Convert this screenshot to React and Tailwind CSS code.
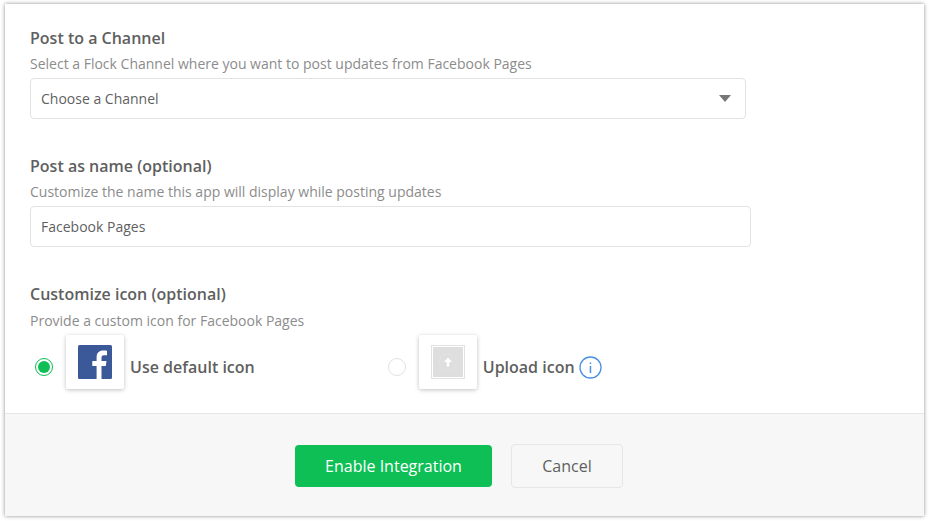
import React from 'react';

const Field = ({ title, hint, gap = 'mt-[5px]', children }) => (
  <div>
    <h3 className="text-base leading-[22px] font-semibold text-[#5f5f5f]">{title}</h3>
    <p className={`${gap} text-sm leading-[19px] text-[#8c8c8c]`}>{hint}</p>
    {children}
  </div>
);

const IconTile = ({ children }) => (
  <div className="flex h-[54px] w-[58px] items-center justify-center rounded-[2px] bg-white shadow-[0_1px_4px_rgba(0,0,0,0.25)]">
    {children}
  </div>
);

const App = () => {
  return (
    <div className="h-[521px] w-[929px] bg-white pt-[4px] pl-[5px] font-['Open_Sans',sans-serif]">
      <div className="flex h-[512px] w-[919px] flex-col bg-white shadow-[0_0_4px_rgba(0,0,0,0.45)]">
        <div className="h-[409px] pt-[23px] pl-[25px]">
          <Field title="Post to a Channel" hint="Select a Flock Channel where you want to post updates from Facebook Pages">
            <div className="mt-[5px] flex h-[41px] w-[716px] items-center justify-between rounded-[4px] border border-[#e2e2e2] pr-[14px] pl-[10px] text-sm text-[#5f5f5f]">
              <span>Choose a Channel</span>
              <svg width="12" height="7" viewBox="0 0 12 7"><path d="M0 0h12L6 7z" fill="#777" /></svg>
            </div>
          </Field>

          <div className="mt-[36px]">
            <Field title="Post as name (optional)" hint="Customize the name this app will display while posting updates">
              <div className="mt-[5px] flex h-[41px] w-[721px] items-center rounded-[4px] border border-[#e2e2e2] pl-[10px] text-sm text-[#5f5f5f]">
                Facebook Pages
              </div>
            </Field>
          </div>

          <div className="mt-[36px]">
            <Field title="Customize icon (optional)" hint="Provide a custom icon for Facebook Pages" gap="mt-[6px]">
              <div className="mt-[5px] flex items-center">
                <div className="mt-[10px] ml-[5px] flex h-[18px] w-[18px] items-center justify-center rounded-full border border-[#0dbf55]">
                  <div className="h-[12px] w-[12px] rounded-full bg-[#0dbf55]" />
                </div>
                <div className="ml-[13px]">
                  <IconTile>
                    <svg width="34" height="34" viewBox="0 0 34 34">
                      <rect width="34" height="34" rx="1.5" fill="#3b5998" />
                      <path d="M23.5 34V21h4.3l.7-5h-5v-3.2c0-1.5.4-2.5 2.5-2.5H29V5.800c-.5-.1-2-.2-3.900-.2-3.900 0-6.500 2.400-6.500 6.700V16H14.300v5h4.300v13z" fill="#fff" />
                    </svg>
                  </IconTile>
                </div>
                <span className="mt-[10px] ml-[6px] text-base font-semibold text-[#5f5f5f]">Use default icon</span>

                <div className="mt-[10px] ml-[133px] h-[18px] w-[18px] rounded-full border border-[#e2e2e2]" />
                <div className="ml-[13px]">
                  <IconTile>
                    <div className="flex h-[34px] w-[34px] items-center justify-center border border-[#e2e2e2] p-[1px]">
                      <div className="flex h-full w-full items-center justify-center bg-[#dedede]">
                        <svg width="18" height="18" viewBox="0 0 18 18">
                          <circle cx="9" cy="9" r="8.500" fill="none" stroke="#eee" strokeWidth="0.700" strokeDasharray="1 1.500" />
                          <path d="M9 4.500L13 9H10.300V13.500H7.700V9H5z" fill="#fff" />
                        </svg>
                      </div>
                    </div>
                  </IconTile>
                </div>
                <span className="mt-[10px] ml-[6px] text-base font-semibold text-[#5f5f5f]">Upload icon</span>
                <svg className="mt-[10px] ml-[4px]" width="23" height="23" viewBox="0 0 23 23">
                  <circle cx="11.500" cy="11.500" r="10.500" fill="none" stroke="#4a90e2" strokeWidth="1.300" />
                  <rect x="10.700" y="10" width="1.500" height="7" fill="#4a90e2" />
                  <rect x="10.700" y="6.500" width="1.500" height="1.600" fill="#4a90e2" />
                </svg>
              </div>
            </Field>
          </div>
        </div>

        <div className="flex flex-1 items-center justify-center gap-[19px] border-t border-[#e6e6e6] bg-[#f7f7f7] pt-[2px] pr-[11px]">
          <button className="h-[42px] w-[197px] rounded-[4px] bg-[#0dbf55] text-base text-white">Enable Integration</button>
          <button className="h-[44px] w-[112px] rounded-[4px] border border-[#e6e6e6] text-base text-[#5f5f5f]">Cancel</button>
        </div>
      </div>
    </div>
  );
};

export default App;
